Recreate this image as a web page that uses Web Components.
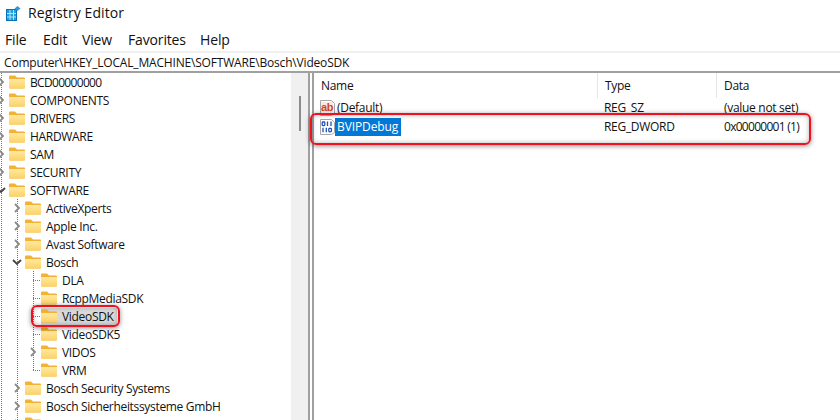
<!DOCTYPE html>
<html>
<head>
<meta charset="utf-8">
<title>Registry Editor</title>
<style>
    html, body { margin: 0; background: #fff; }
    body { font-family: "Open Sans", "Noto Sans", sans-serif; color: #111; }
</style>
</head>
<body>
<reg-editor>
    <reg-titlebar>Registry Editor</reg-titlebar>
    <reg-menubar>
        <span style="width:38px">File</span>
        <span style="width:39px">Edit</span>
        <span style="width:46px">View</span>
        <span style="width:72px">Favorites</span>
        <span>Help</span>
    </reg-menubar>
    <reg-address>Computer\HKEY_LOCAL_MACHINE\SOFTWARE\Bosch\VideoSDK</reg-address>
    <reg-panes>
        <reg-tree slot="tree">
            <tree-row level="0" exp="closed" style="--ls:-0.68px">BCD00000000</tree-row>
            <tree-row level="0" exp="closed">COMPONENTS</tree-row>
            <tree-row level="0" exp="closed">DRIVERS</tree-row>
            <tree-row level="0" exp="closed">HARDWARE</tree-row>
            <tree-row level="0" exp="closed">SAM</tree-row>
            <tree-row level="0" exp="closed">SECURITY</tree-row>
            <tree-row level="0" exp="open">SOFTWARE</tree-row>
            <tree-row level="1" exp="closed" guides="1">ActiveXperts</tree-row>
            <tree-row level="1" exp="closed" guides="1">Apple Inc.</tree-row>
            <tree-row level="1" exp="closed" guides="1">Avast Software</tree-row>
            <tree-row level="1" exp="open" guides="1">Bosch</tree-row>
            <tree-row level="2" guides="1 2" tick>DLA</tree-row>
            <tree-row level="2" guides="1 2" tick>RcppMediaSDK</tree-row>
            <tree-row level="2" guides="1 2" tick selected>VideoSDK</tree-row>
            <tree-row level="2" guides="1 2" tick>VideoSDK5</tree-row>
            <tree-row level="2" exp="closed" guides="1 2">VIDOS</tree-row>
            <tree-row level="2" guides="1" tick last>VRM</tree-row>
            <tree-row level="1" exp="closed" guides="1">Bosch Security Systems</tree-row>
            <tree-row level="1" exp="closed" guides="1">Bosch Sicherheitssysteme GmbH</tree-row>
            <tree-row level="1" exp="closed" guides="1"></tree-row>
        </reg-tree>
        <reg-list slot="list">
            <list-row kind="sz" name="(Default)" type="REG_SZ" data="(value not set)"></list-row>
            <list-row kind="dword" name="BVIPDebug" type="REG_DWORD" data="0x00000001 (1)" data-ls="-0.72px" selected></list-row>
        </reg-list>
    </reg-panes>
    <red-mark style="left:31px;top:305px;width:89px;height:22px"></red-mark>
    <red-mark style="left:310px;top:113px;width:501px;height:32px"></red-mark>
</reg-editor>

<script>
class RegEditor extends HTMLElement {
    constructor() {
        super();
        this.attachShadow({ mode: 'open' }).innerHTML = `
            <style>
                :host { display: flex; flex-direction: column; position: relative; width: 840px; height: 420px; overflow: hidden; background: #fff; }
            </style>
            <slot></slot>`;
    }
}

class RegTitlebar extends HTMLElement {
    constructor() {
        super();
        this.attachShadow({ mode: 'open' }).innerHTML = `
            <style>
                :host { display: flex; align-items: center; gap: 7px; height: 24px; padding: 0 0 2px 6px; font-size: 14px; letter-spacing: 0.1px; color: #111; }
                svg { display: block; width: 15px; height: 15px; flex: none; margin-top: 2px; }
            </style>
            <svg viewBox="0 0 15 15">
                <path fill="#1aa0dc" d="M0 3h11v12H0z"/>
                <path fill="#0b6fb5" d="M0 3h11v1H0zM0 14h11v1H0zM0 3h1v12H0zM10 3h1v12h-1z"/>
                <path stroke="#b7e3f7" stroke-width="1" d="M4 4v10M7.500 4v10M1 7.500h9M1 11h9"/>
                <path fill="#2a9bd6" d="M11.500 0l3 2.500-3 2.500-3-2.500z"/>
            </svg>
            <slot></slot>`;
    }
}

class RegMenubar extends HTMLElement {
    constructor() {
        super();
        this.attachShadow({ mode: 'open' }).innerHTML = `
            <style>
                :host { display: flex; align-items: center; height: 23px; padding: 2px 0 0 5px; font-size: 14px; letter-spacing: -0.15px; color: #111; border-bottom: 2px solid #f0f0f0; }
                ::slotted(span) { display: block; flex: none; }
            </style>
            <slot></slot>`;
    }
}

class RegAddress extends HTMLElement {
    constructor() {
        super();
        this.attachShadow({ mode: 'open' }).innerHTML = `
            <style>
                :host { display: flex; align-items: center; height: 18px; padding-left: 4px; font-size: 12px; letter-spacing: -0.18px; color: #111; border-bottom: 2px solid #a0a0a0; }
            </style>
            <slot></slot>`;
    }
}

class RegPanes extends HTMLElement {
    constructor() {
        super();
        this.attachShadow({ mode: 'open' }).innerHTML = `
            <style>
                :host { display: grid; grid-template-columns: 308px 2px 2px 2px 1fr; flex: 1; min-height: 0; }
                .line { background: #a0a0a0; }
            </style>
            <slot name="tree"></slot>
            <div class="line"></div>
            <div></div>
            <div class="line"></div>
            <slot name="list"></slot>`;
    }
}

class RegTree extends HTMLElement {
    constructor() {
        super();
        this.attachShadow({ mode: 'open' }).innerHTML = `
            <style>
                :host { display: grid; grid-template-columns: 1fr 17px; overflow: hidden; min-height: 0; }
                .rows { display: flex; flex-direction: column; min-width: 0; overflow: hidden; }
                .bar { background: #f0f0f0; display: flex; justify-content: center; padding-top: 23px; }
                .thumb { width: 2px; height: 35px; background: #8c8c8c; }
            </style>
            <div class="rows"><slot></slot></div>
            <div class="bar"><div class="thumb"></div></div>`;
    }
}

const FOLDER = `
    <svg class="folder" viewBox="0 0 16 14">
        <defs><linearGradient id="fg" x1="0" y1="0" x2="0" y2="1">
            <stop offset="0" stop-color="#ffe9a0"/><stop offset="1" stop-color="#fcd268"/>
        </linearGradient></defs>
        <path fill="#f2b233" d="M0 1.500Q0 .5 1 .5h5l2 2h7q1 0 1 1v9q0 1-1 1H1q-1 0-1-1z"/>
        <path fill="url(#fg)" d="M0 4h16v8.500q0 1-1 1H1q-1 0-1-1z"/>
    </svg>`;

const CHEVRON = {
    closed: `<svg viewBox="0 0 8 10"><path d="M2 1l4 4-4 4" fill="none" stroke="#8a8a8a" stroke-width="1.800"/></svg>`,
    open: `<svg viewBox="0 0 10 8"><path d="M1 2l4 4 4-4" fill="none" stroke="#444" stroke-width="1.800"/></svg>`
};

const DOTS = 'repeating-linear-gradient(to bottom, #777 0 1px, transparent 1px 2px)';

class TreeRow extends HTMLElement {
    constructor() {
        super();
        const level = +this.getAttribute('level');
        const exp = this.getAttribute('exp');
        const guides = (this.getAttribute('guides') || '').split(' ').filter(Boolean).map(Number);
        const selected = this.hasAttribute('selected');

        // dotted tree lines are painted as row backgrounds
        const layers = [`${DOTS} 1px 0 / 1px 100% no-repeat`];
        guides.forEach(g => layers.push(`${DOTS} ${1 + g * 16}px 0 / 1px 100% no-repeat`));
        if (this.hasAttribute('last')) {
            layers.push(`${DOTS} 33px 0 / 1px 10px no-repeat`);
        }
        if (this.hasAttribute('tick')) {
            layers.push(`repeating-linear-gradient(to right, #777 0 1px, transparent 1px 2px) ${1 + level * 16}px 9px / 7px 1px no-repeat`);
        }

        this.attachShadow({ mode: 'open' }).innerHTML = `
            <style>
                :host { display: flex; align-items: center; flex: none; height: 18px; font-size: 12px; color: #111; white-space: nowrap; background: ${layers.join(', ')}; }
                .exp { display: flex; align-items: center; justify-content: center; flex: none; width: 12px; height: 18px; margin-left: ${level * 16 - 3}px; }
                .exp svg { display: block; flex: none; width: ${exp === 'open' ? 10 : 8}px; height: ${exp === 'open' ? 8 : 10}px; margin-right: 4px; }
                .folder { display: block; flex: none; width: 16px; height: 14px; }
                .sel { display: flex; align-items: center; height: 17px; padding: 0 3px 0 0; ${selected ? 'background: #d9d9d9;' : ''} }
                .label { letter-spacing: var(--ls, -0.32px); margin-left: 5px; }
            </style>
            <span class="exp">${exp ? CHEVRON[exp] : ''}</span>
            <span class="sel">${FOLDER}<span class="label"><slot></slot></span></span>`;
    }
}

class RegList extends HTMLElement {
    constructor() {
        super();
        this.attachShadow({ mode: 'open' }).innerHTML = `
            <style>
                :host { display: flex; flex-direction: column; min-width: 0; font-size: 12px; color: #111; }
                .head { display: grid; grid-template-columns: 284px 119px 1fr; height: 25px; }
                .head div { display: flex; align-items: center; padding-left: 7px; height: 25px; border-right: 1px solid #e5e5e5; box-sizing: border-box; letter-spacing: -0.3px; }
                .head div:last-child { border-right: none; }
            </style>
            <div class="head"><div>Name</div><div>Type</div><div>Data</div></div>
            <slot></slot>`;
    }
}

const PAGE = `<path d="M.5.500h11l3 3v10l-3 2H.5z" fill="#fff" stroke="#a8a8a8"/>`;
const LIST_ICONS = {
    sz: `<svg viewBox="0 0 15 16">${PAGE}
            <path d="M1 2h12v10H1z" fill="#fbe9e2"/>
            <text x="7" y="10.500" text-anchor="middle" font-family="Liberation Sans" font-weight="700" font-size="11" letter-spacing="-.4" fill="#d0461f">ab</text>
         </svg>`,
    dword: `<svg viewBox="0 0 15 16">${PAGE}
            <g fill="none" stroke="#1f52b8" stroke-width="1.300">
                <rect x="2.200" y="3" width="2.600" height="3.600" rx=".8"/><path d="M7.500 2.500v4.600M11 2.500v4.600"/>
                <path d="M3 8.800v4.400M6.300 8.800v4.400"/><rect x="8.800" y="9.300" width="2.600" height="3.600" rx=".8"/>
            </g>
         </svg>`
};

class ListRow extends HTMLElement {
    constructor() {
        super();
        const sel = this.hasAttribute('selected');
        const dataLs = this.getAttribute('data-ls') || '-0.3px';
        this.attachShadow({ mode: 'open' }).innerHTML = `
            <style>
                :host { display: grid; grid-template-columns: 284px 120px 1fr; align-items: center; height: 19px; letter-spacing: -0.3px; }
                .name { display: flex; align-items: center; padding-left: 6px; }
                svg { display: block; flex: none; width: 15px; height: 16px; }
                .txt { display: block; padding: 0 3px 0 2px; height: 18px; line-height: 18px; }
                .txt.on { background: #0078d7; color: #fff; letter-spacing: -0.1px; }
                .type, .data { padding-left: 6px; }
                .data { letter-spacing: ${dataLs}; }
            </style>
            <div class="name">${LIST_ICONS[this.getAttribute('kind')]}<span class="txt ${sel ? 'on' : ''}">${this.getAttribute('name')}</span></div>
            <div class="type">${this.getAttribute('type')}</div>
            <div class="data">${this.getAttribute('data')}</div>`;
    }
}

// red annotation round a part of the shot, lies over the content
class RedMark extends HTMLElement {
    constructor() {
        super();
        this.attachShadow({ mode: 'open' }).innerHTML = `
            <style>
                :host { display: block; position: absolute; box-sizing: border-box; border: 2px solid #f01020; border-radius: 6px; box-shadow: 0 1px 5px rgba(0,0,0,.45), inset 0 0 5px rgba(0,0,0,.3); }
            </style>`;
    }
}

customElements.define('reg-editor', RegEditor);
customElements.define('reg-titlebar', RegTitlebar);
customElements.define('reg-menubar', RegMenubar);
customElements.define('reg-address', RegAddress);
customElements.define('reg-panes', RegPanes);
customElements.define('reg-tree', RegTree);
customElements.define('tree-row', TreeRow);
customElements.define('reg-list', RegList);
customElements.define('list-row', ListRow);
customElements.define('red-mark', RedMark);
</script>
</body>
</html>
